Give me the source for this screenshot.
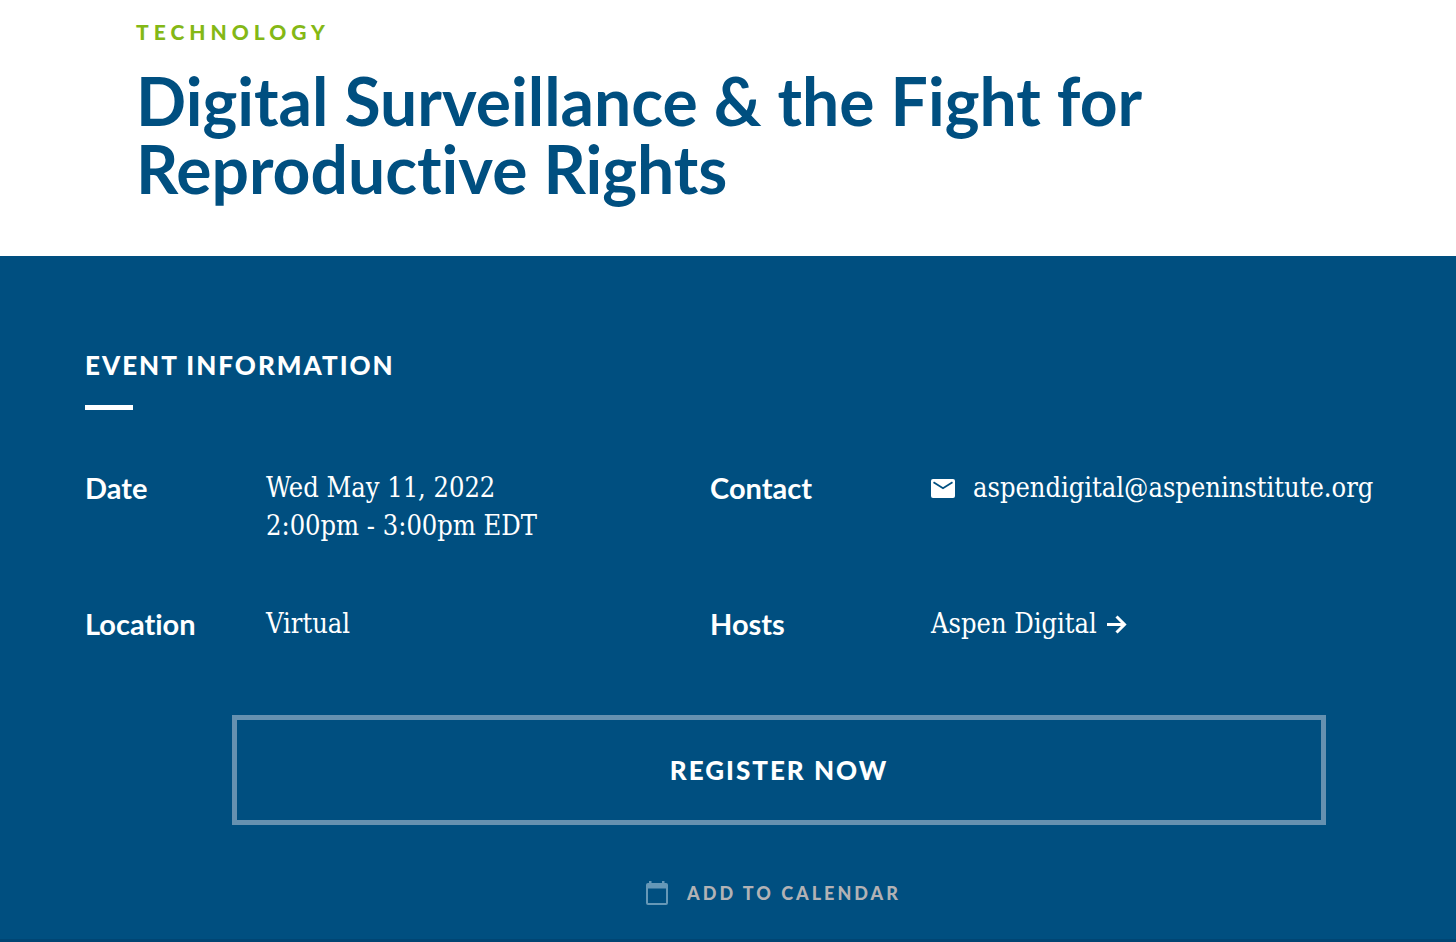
<main>
  <header>
    <p class="topic">TECHNOLOGY</p>
    <h1>Digital Surveillance &amp; the Fight for<br />Reproductive Rights</h1>
  </header>
  <section class="event">
    <h2>EVENT INFORMATION</h2>
    <div class="details">
      <dl class="left">
        <dt>Date</dt>
        <dd>Wed May 11, 2022<br />2:00pm - 3:00pm EDT</dd>
        <dt>Location</dt>
        <dd>Virtual</dd>
      </dl>
      <dl class="right">
        <dt>Contact</dt>
        <dd>
          <a class="mail" href="mailto:aspendigital@aspeninstitute.org">
            <svg width="24" height="20" viewBox="0 0 24 20" aria-hidden="true">
              <rect y="1" width="24" height="19" rx="2" fill="#fff" />
              <path d="M2.500 4.300 12 10.300 21.500 4.300" fill="none" stroke="#004f80" stroke-width="1.800" />
            </svg>
            <span>aspendigital@aspeninstitute.org</span>
          </a>
        </dd>
        <dt>Hosts</dt>
        <dd>
          <a class="host" href="#host">
            <span>Aspen Digital</span>
            <svg width="20" height="20" viewBox="0 0 20 20" aria-hidden="true">
              <path d="M0 10.500H17M9.500 2.500l8 8-8 8" fill="none" stroke="#fff" stroke-width="3" />
            </svg>
          </a>
        </dd>
      </dl>
    </div>
    <div class="actions">
      <button class="register" type="button">REGISTER NOW</button>
      <button class="calendar" type="button">
        <svg width="24" height="26" viewBox="0 0 24 26" aria-hidden="true">
          <path fill="#6698b7" fill-rule="evenodd" d="M4 1H6.500V3H17V1H19.500V3H21Q23 3 23 5V23Q23 25 21 25H3Q1 25 1 23V5Q1 3 3 3H4ZM3 8.500V23H21V8.500Z" />
        </svg>
        <span>ADD TO CALENDAR</span>
      </button>
    </div>
  </section>
</main>

<style>
  :global(body) { margin: 0; background: #004f80; }
  main { font-family: Lato, "Open Sans", sans-serif; font-variant-ligatures: none; color: #fff; }
  header { background: #fff; padding: 19px 136px 53px; }
  p, h1, h2, dl, dd { margin: 0; }
  .topic { color: #84b816; font-size: 21px; line-height: 26px; font-weight: 900; letter-spacing: 5px; }
  h1 { margin-top: 22px; color: #004f80; font-size: 66px; line-height: 68px; font-weight: 700; }
  .event { padding: 92px 78px 33px 85px; border-bottom: 3px solid #004573; }
  h2 { font-size: 26px; line-height: 34px; font-weight: 900; letter-spacing: 2px; }
  h2::after { content: ""; display: block; width: 48px; height: 5px; margin-top: 23px; background: #fff; }
  .details { display: grid; grid-template-columns: 625fr 668fr; margin-top: 59px; }
  dl { display: grid; align-content: start; row-gap: 60px; font-size: 29px; line-height: 38px; }
  .left { grid-template-columns: 181px 1fr; }
  .right { grid-template-columns: 221px 1fr; grid-template-rows: 76px auto; }
  dt { font-weight: 700; }
  dd { font-family: "DejaVu Serif Condensed", "DejaVu Serif", serif; font-size: 27px; white-space: nowrap; }
  a { display: inline-flex; align-items: center; color: inherit; text-decoration: none; }
  .mail { gap: 18px; }
  .host { gap: 10px; }
  button { border: 0; padding: 0; background: transparent; color: #fff; font-family: inherit; font-variant-ligatures: inherit; cursor: pointer; }
  .actions { display: flex; flex-direction: column; align-items: center; margin: 72px 52px 0 147px; }
  .register { box-sizing: border-box; width: 100%; height: 110px; border: 5px solid #6691b0; font-size: 26px; font-weight: 900; letter-spacing: 2px; }
  .calendar { display: flex; align-items: center; gap: 18px; margin-top: 55px; padding-right: 12px; color: #b2b2b5; font-size: 18px; line-height: 26px; font-weight: 900; letter-spacing: 3px; }
</style>
